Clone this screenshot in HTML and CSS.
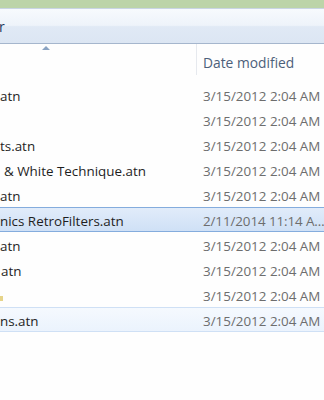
FILE: index.html
```html
<!DOCTYPE html>
<html lang="en">
<head>
  <meta charset="UTF-8" />
  <title>Actions</title>
  <link rel="stylesheet" href="styles.css">
</head>
<body>
  <div class="titlebar"></div>
  <div class="toolbar"><span class="tool">r</span></div>

  <div class="list">
    <div class="head">
      <div class="col-name"><span class="sort"></span></div>
      <div class="col-date">Date modified</div>
    </div>

    <div class="rows">
      <div class="row"><div class="name">atn</div><div class="date">3/15/2012 2:04 AM</div></div>
      <div class="row"><div class="name"></div><div class="date">3/15/2012 2:04 AM</div></div>
      <div class="row"><div class="name">ts.atn</div><div class="date">3/15/2012 2:04 AM</div></div>
      <div class="row"><div class="name indent">&amp; White Technique.atn</div><div class="date">3/15/2012 2:04 AM</div></div>
      <div class="row"><div class="name">atn</div><div class="date">3/15/2012 2:04 AM</div></div>
      <div class="row selected"><div class="name">nics RetroFilters.atn</div><div class="date tight">2/11/2014 11:14 A…</div></div>
      <div class="row"><div class="name">atn</div><div class="date">3/15/2012 2:04 AM</div></div>
      <div class="row"><div class="name nudge">atn</div><div class="date">3/15/2012 2:04 AM</div></div>
      <div class="row"><div class="name"><span class="icon-edge"></span></div><div class="date">3/15/2012 2:04 AM</div></div>
      <div class="row hover"><div class="name">ns.atn</div><div class="date">3/15/2012 2:04 AM</div></div>
    </div>
  </div>
</body>
</html>
```

FILE: styles.css
```css
html, body {
  margin: 0; padding: 0;
  background: #fefefe;
  font-family: 'Open Sans', sans-serif;
  font-size: 13.4px;
  overflow: hidden;
}
* { box-sizing: border-box; }

.titlebar {
  height: 9px;
  background: #bcd4a8;
  border-bottom: 1px solid #c9d5e3;
}

.toolbar {
  height: 35px;
  display: flex;
  align-items: center;
  background: linear-gradient(to bottom, #f7fafd 0%, #eef3fa 48%, #e0e9f5 52%, #dce6f3 100%);
  border-bottom: 1px solid #a5b6cd;
  color: #1e395b;
  font-size: 14px;
}

.tool { margin-left: -1px; }

.head {
  display: flex;
  height: 31px;
}

.col-name {
  width: 197px;
  flex-shrink: 0;
  border-right: 1px solid #e6e9ee;
  position: relative;
}

.sort {
  position: absolute;
  left: 42px;
  top: 2px;
  width: 0; height: 0;
  border-left: 4px solid transparent;
  border-right: 4px solid transparent;
  border-bottom: 4px solid #8aa3c2;
}

.col-date {
  padding: 9px 0 0 6px;
  color: #4c607a;
  font-size: 13.8px;
}

.rows { padding-top: 7px; }

.row {
  display: flex;
  align-items: center;
  height: 25px;
  padding-top: 2px;
  color: #1e1e1e;
  border-top: 1px solid transparent;
  border-bottom: 1px solid transparent;
}

.name {
  width: 197px;
  flex-shrink: 0;
  white-space: pre;
  overflow: hidden;
}

.indent { padding-left: 4px; }
.nudge { padding-left: 1px; }

.date {
  padding-left: 6px;
  color: #6d6d6d;
  white-space: nowrap;
}

.tight { letter-spacing: -0.1px; }

.selected {
  background: linear-gradient(to bottom, #e1ecfa, #cfe0f6);
  border-color: #84acdd;
}

.hover {
  background: linear-gradient(to bottom, #f5f9fe, #ebf3fd);
  border-color: #cfe0f5;
}

.icon-edge {
  display: inline-block;
  width: 3px;
  height: 5px;
  margin-top: 6px;
  background: #e6d48a;
}
```
